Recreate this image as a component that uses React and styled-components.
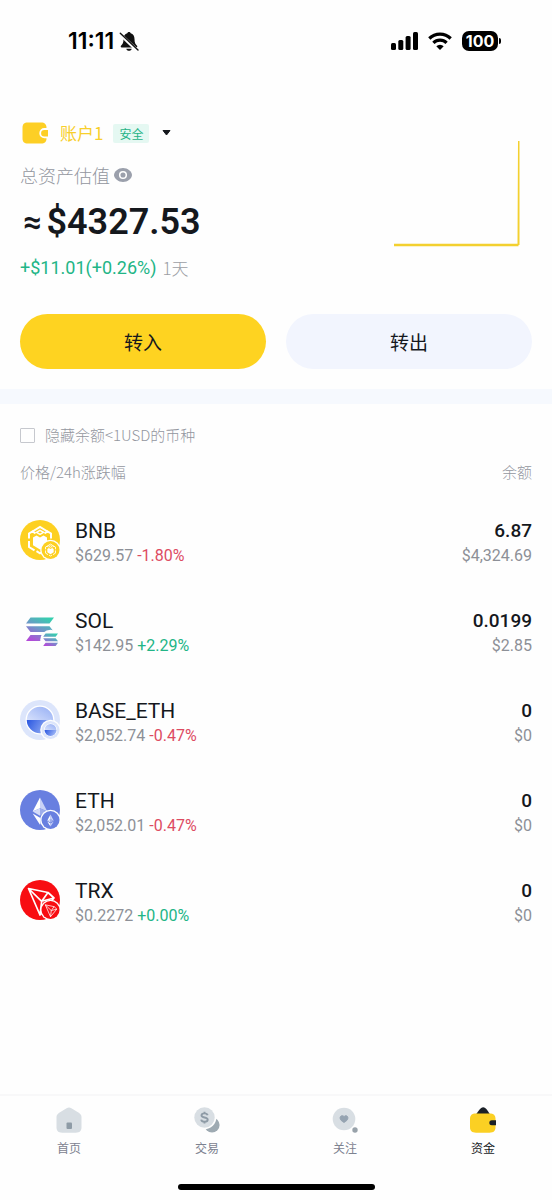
import React, { useState } from "react";
import styled, { createGlobalStyle } from "styled-components";

const GlobalStyle = createGlobalStyle`
	* {
		box-sizing: border-box;
	}

	body {
		margin: 0;
		background: #fefefe;
		color: #15181d;
		font-family: Roboto, "Noto Sans CJK SC", sans-serif;
	}

	button,
	input {
		font: inherit;
		margin: 0;
	}
`;

const Page = styled.div`
	display: flex;
	flex-direction: column;
	min-height: 100vh;
`;

const StatusBar = styled.div`
	display: flex;
	align-items: center;
	justify-content: space-between;
	height: 82px;
	padding: 0 54px 0 68px;
`;

const StatusGroup = styled.div`
	display: flex;
	align-items: center;
	gap: ${(props) => props.$gap}px;
`;

const Clock = styled.span`
	font-family: Inter, sans-serif;
	font-size: 23px;
	font-weight: 600;
	line-height: 24px;
	color: #000;
`;

const Battery = styled.span`
	position: relative;
	width: 36px;
	height: 20px;
	border-radius: 7px;
	background: #000;
	color: #fff;
	font-family: Inter, sans-serif;
	font-size: 16px;
	font-weight: 700;
	line-height: 20px;
	text-align: center;

	&::after {
		content: "";
		position: absolute;
		right: -3px;
		top: 7px;
		width: 2px;
		height: 6px;
		border-radius: 0 2px 2px 0;
		background: #000;
	}
`;

const Account = styled.section`
	padding: 41px 20px 20px;
`;

const Summary = styled.div`
	display: flex;
	justify-content: space-between;
`;

const SummaryText = styled.div`
	display: flex;
	flex-direction: column;
`;

const AccountButton = styled.button`
	display: flex;
	align-items: center;
	height: 20px;
	padding: 0 0 0 2px;
	border: 0;
	background: none;
	color: #15181d;
`;

const AccountName = styled.span`
	margin: 0 10px 0 12px;
	color: #f8cf2b;
	font-family: "Noto Sans CJK SC", sans-serif;
	font-size: 17px;
	line-height: 20px;
`;

const Tag = styled.span`
	margin-right: 13px;
	padding: 0 6px;
	border-radius: 2px;
	background: #e5f8f2;
	color: #27b386;
	font-family: "Noto Sans CJK SC", sans-serif;
	font-size: 12px;
	line-height: 19px;
`;

const TotalLabel = styled.div`
	display: flex;
	align-items: center;
	gap: 4px;
	margin-top: 20px;
	color: #93969f;
	font-family: "Noto Sans CJK SC", sans-serif;
	font-size: 18px;
	font-weight: 300;
	line-height: 24px;
`;

const IconButton = styled.button`
	display: flex;
	padding: 0;
	border: 0;
	background: none;
`;

const Balance = styled.div`
	display: flex;
	align-items: center;
	gap: 5px;
	margin-top: 15px;
	padding-left: 3px;
	font-size: 36px;
	font-weight: 600;
	line-height: 40px;
`;

const Approx = styled.span`
	font-size: 32px;
	font-weight: 700;
`;

const Change = styled.div`
	display: flex;
	align-items: center;
	gap: 6px;
	height: 24px;
	margin-top: 14px;
	font-size: 18px;
	line-height: 24px;
	color: #22b586;
`;

const Period = styled.span`
	color: #9c9ea5;
	font-family: "Noto Sans CJK SC", sans-serif;
	font-size: 17px;
	font-weight: 300;
`;

const Chart = styled.svg`
	flex: none;
	margin: 18px 12px 0 0;
`;

const Actions = styled.div`
	display: grid;
	grid-template-columns: 1fr 1fr;
	gap: 20px;
	margin-top: 34px;
`;

const ActionButton = styled.button`
	height: 55px;
	border: 0;
	border-radius: 28px;
	background: ${(props) => (props.$primary ? "#fed321" : "#f2f5fe")};
	color: #15181d;
	font-family: "Noto Sans CJK SC", sans-serif;
	font-size: 19px;
	line-height: 24px;
`;

const Divider = styled.hr`
	width: 100%;
	height: 15px;
	margin: 0;
	border: 0;
	background: #f6f9fe;
`;

const Assets = styled.section`
	padding: 21px 20px 0;
`;

const Filter = styled.label`
	display: flex;
	align-items: center;
	gap: 10px;
	color: #93969f;
	font-family: "Noto Sans CJK SC", sans-serif;
	font-size: 15px;
	font-weight: 300;
	line-height: 20px;
`;

const Checkbox = styled.input`
	appearance: none;
	width: 15px;
	height: 15px;
	border: 1px solid #c6c8ce;
	border-radius: 1px;

	&:checked {
		background: #fed321;
	}
`;

const Table = styled.table`
	width: 100%;
	margin-top: 16px;
	border-collapse: collapse;
`;

const HeadCell = styled.th`
	padding: 0 0 12px;
	color: #93969f;
	font-family: "Noto Sans CJK SC", sans-serif;
	font-size: 15px;
	font-weight: 300;
	line-height: 22px;
	text-align: ${(props) => (props.$end ? "right" : "left")};
`;

const Cell = styled.td`
	height: 90px;
	padding: 0;
	vertical-align: middle;
	text-align: ${(props) => (props.$end ? "right" : "left")};
`;

const Coin = styled.div`
	display: flex;
	align-items: center;
	gap: 14px;
`;

const CellText = styled.div`
	padding-top: 6px;
`;

const Symbol = styled.div`
	font-size: 21px;
	line-height: 26px;
`;

const Amount = styled.div`
	font-size: 19px;
	font-weight: 500;
	line-height: 26px;
`;

const Detail = styled.div`
	color: #8d9097;
	font-size: 16px;
	line-height: 24px;
`;

const Percent = styled.span`
	margin-left: 4px;
	color: ${(props) => (props.$up ? "#22b586" : "#dd4b62")};
`;

const Footer = styled.footer`
	margin-top: auto;
	border-top: 2px solid #f8f8f9;
`;

const Nav = styled.nav`
	display: grid;
	grid-template-columns: repeat(4, 1fr);
	padding-top: 11px;
`;

const NavLink = styled.a`
	display: flex;
	flex-direction: column;
	align-items: center;
	gap: 5px;
	color: ${(props) => (props.$active ? "#15181d" : "#7d8290")};
	font-family: "Noto Sans CJK SC", sans-serif;
	font-size: 12px;
	line-height: 20px;
	text-decoration: none;
`;

const HomeBar = styled.div`
	width: 197px;
	height: 6px;
	margin: 26px auto 10px;
	border-radius: 3px;
	background: #000;
`;

const BellOff = () => (
	<svg width='20' height='21' viewBox='0 0 20 21' aria-hidden='true'>
		<path
			d='M10 1c.9 0 1.600.6 1.700 1.300C14.200 3 15.500 5.200 15.500 8c0 3.800.9 5.200 2.500 6.800.6.7.3 1.700-.7 1.700H2.700c-1 0-1.300-1-.7-1.700C3.600 13.200 4.500 11.800 4.500 8c0-2.800 1.300-5 3.800-5.700C8.400 1.600 9.100 1 10 1z'
			fill='#111'
		/>
		<path d='M7.300 17.700h5.400c-.3 1.400-1.300 2.100-2.700 2.100s-2.400-.7-2.700-2.100z' fill='#111' />
		<path d='M1 3.200L18.300 19.500' stroke='#fefefe' strokeWidth='3.400' />
		<path d='M1.300 2.200L19 19' stroke='#111' strokeWidth='1.400' strokeLinecap='round' />
	</svg>
);

const Signal = () => (
	<svg width='27' height='18' viewBox='0 0 27 18' aria-hidden='true'>
		<rect x='0' y='11' width='5' height='7' rx='1.500' />
		<rect x='7.300' y='8' width='5' height='10' rx='1.500' />
		<rect x='14.600' y='4' width='5' height='14' rx='1.500' />
		<rect x='22' y='0' width='5' height='18' rx='1.500' />
	</svg>
);

const Wifi = () => (
	<svg width='24' height='18' viewBox='0 0 24 18' aria-hidden='true'>
		<g fill='none' stroke='#000' strokeWidth='3.200'>
			<path d='M1.300 6.500a15.200 15.200 0 0 1 21.400 0' />
			<path d='M5.400 10.800a9.300 9.300 0 0 1 13.200 0' />
		</g>
		<path d='M8.300 14.200a5.200 5.200 0 0 1 7.400 0L12 18z' />
	</svg>
);

const AccountIcon = () => (
	<svg width='26' height='22' viewBox='0 0 26 22' aria-hidden='true'>
		<path
			d='M6 .5h13c3.800 0 5.500 2 5.500 5.500v10c0 4-1.700 5.500-5.500 5.500H6c-4 0-5.500-1.500-5.500-5.500V6C.5 2 2 .5 6 .5z'
			fill='#fdcf25'
		/>
		<path d='M26 7h-3.600a4.200 4.200 0 0 0 0 8.400H26' fill='#fdcf25' stroke='#fff' strokeWidth='1.800' />
	</svg>
);

const Eye = () => (
	<svg width='18' height='14' viewBox='0 0 18 14' aria-hidden='true'>
		<path
			d='M9 0C13.600 0 18 3.600 18 7s-4.400 7-9 7-9-3.600-9-7 4.400-7 9-7z'
			fill='#9ba0ac'
		/>
		<circle cx='9' cy='7' r='3.300' fill='none' stroke='#fff' strokeWidth='1.500' />
	</svg>
);

const BnbMark = () => (
	<>
		<circle cx='20' cy='20' r='20' fill='#fdd021' />
		<g fill='none' stroke='#fff' strokeWidth='2'>
			<path d='M12.500 11.500L20 7l7.500 4.500' />
			<path d='M9 18.500v-5l3.500-2 3 1.800M31 18.500v-5l-3.500-2-3 1.800' />
			<path d='M9 21v6l5.500 3.300M31 21v6l-5.500 3.300M16.500 31.200L20 33.300l3.500-2.100' />
			<path d='M16.500 12.300l3.500-2 3.500 2-3.500 2z' strokeWidth='1.500' />
		</g>
		<path d='M13 17.500l3.500-2 3.500 2 3.500-2 3.500 2v7.700l-7 4.300-7-4.300z' fill='#fff' />
	</>
);

const SolMark = () => (
	<g fill='url(#solFill)'>
		<path d='M10.500 7.500H34l-4.500 6H6z' />
		<path d='M6 16.300h23.500l4.500 5.700H10.500z' />
		<path d='M10.500 25H34l-4.500 6H6z' />
	</g>
);

const BaseMark = () => (
	<>
		<circle cx='20' cy='20' r='20' fill='#dce5fb' />
		<circle cx='20' cy='20' r='14.500' fill='#fff' />
		<circle cx='20' cy='20' r='13.200' fill='url(#baseTop)' />
		<path d='M6.800 20h26.400a13.200 13.200 0 0 1-26.400 0z' fill='url(#baseBottom)' />
	</>
);

const EthMark = () => (
	<>
		<circle cx='20' cy='20' r='20' fill='#687fe0' />
		<path d='M20 7.500v10.700l-7.300 3.300z' fill='#fff' />
		<path d='M20 7.500l7.300 14-7.300-3.300z' fill='#c9d2f6' />
		<path d='M12.700 21.500l7.300-3.300v7.600z' fill='#d4dbf8' />
		<path d='M27.300 21.500L20 18.200v7.600z' fill='#9eadeb' />
		<path d='M12.700 23.500l7.300 4.200v7z' fill='#fff' />
		<path d='M27.300 23.500L20 27.700v7z' fill='#c3cdf5' />
	</>
);

const TrxMark = () => (
	<>
		<circle cx='20' cy='20' r='20' fill='#f80d12' />
		<path
			d='M8.500 8.500l19.500 4 6 5.500L20 35z M8.500 8.500l13.200 12.800L20 35M21.700 21.300L34 18M21.700 21.300L28 12.500'
			fill='none'
			stroke='#fff'
			strokeWidth='1.700'
			strokeLinejoin='round'
		/>
	</>
);

const marks = {
	BNB: BnbMark,
	SOL: SolMark,
	BASE_ETH: BaseMark,
	ETH: EthMark,
	TRX: TrxMark,
};

// token logo with its network logo in the lower right corner
const CoinIcon = ({ name }) => {
	const Mark = marks[name];

	return (
		<svg width='41' height='41' viewBox='0 0 41 41' aria-hidden='true'>
			<defs>
				<linearGradient id='solFill' gradientUnits='userSpaceOnUse' x1='26' y1='7' x2='14' y2='32'>
					<stop offset='0' stopColor='#35cfae' />
					<stop offset='0.5' stopColor='#6f95c8' />
					<stop offset='1' stopColor='#b34ad8' />
				</linearGradient>
				<linearGradient id='baseTop' x1='0' y1='1' x2='0.6' y2='0'>
					<stop offset='0' stopColor='#f4f7ff' />
					<stop offset='1' stopColor='#a3b9f6' />
				</linearGradient>
				<linearGradient id='baseBottom' x1='0' y1='0' x2='1' y2='0.3'>
					<stop offset='0' stopColor='#2956e0' />
					<stop offset='1' stopColor='#9db5f6' />
				</linearGradient>
			</defs>
			<Mark />
			<circle cx='30.500' cy='30' r='10.300' fill='#fefefe' />
			{name === "SOL" ? (
				<g transform='translate(20 19.500) scale(.53)'>
					<Mark />
				</g>
			) : (
				<g transform='translate(21.500 21) scale(.45)'>
					<Mark />
				</g>
			)}
		</svg>
	);
};

const HomeIcon = () => (
	<svg width='26' height='26' viewBox='0 0 26 26' aria-hidden='true'>
		<path
			d='M10.600 1.200c1.500-1 3.300-1 4.800 0l7.400 4.600c1.800 1.100 2.700 2.500 2.700 4.500V20c0 4-1.700 5.700-5.700 5.700H6.200C2.200 25.700.5 24 .5 20v-9.700c0-2 .9-3.400 2.700-4.500z'
			fill='#d8dee3'
		/>
		<rect x='10.500' y='15.500' width='5.500' height='6.500' rx='1' fill='#8e9ba6' />
	</svg>
);

const TradeIcon = () => (
	<svg width='26' height='26' viewBox='0 0 26 26' aria-hidden='true'>
		<circle cx='18' cy='18' r='7.600' fill='#9eaab2' />
		<circle cx='10.500' cy='10.500' r='11.800' fill='#fefefe' />
		<circle cx='10.500' cy='10.500' r='10.200' fill='#d8dee3' />
		<path
			d='M13.600 8.300c-.3-1.200-1.400-1.900-3.100-1.900-1.800 0-3 .8-3 2.100 0 2.900 6.200 1.200 6.200 4.200 0 1.300-1.300 2.100-3.200 2.100s-3.100-.8-3.300-2.100M10.500 4.800v1.800M10.500 14.600v1.800'
			fill='none'
			stroke='#8e9ba6'
			strokeWidth='1.900'
		/>
	</svg>
);

const FollowIcon = () => (
	<svg width='26' height='26' viewBox='0 0 26 26' aria-hidden='true'>
		<circle cx='12' cy='12' r='11.300' fill='#d8dee3' />
		<path
			d='M12 15.400c-2.300-1.200-3.900-2.600-3.900-4.400 0-2.600 2.700-3 3.900-1.400 1.200-1.600 3.900-1.200 3.900 1.400 0 1.800-1.600 3.200-3.900 4.400z'
			fill='#95a3b1'
			stroke='#95a3b1'
		/>
		<circle cx='23' cy='23' r='2.700' fill='#98a2aa' />
	</svg>
);

const WalletIcon = () => (
	<svg width='26' height='26' viewBox='0 0 26 26' aria-hidden='true'>
		<path d='M6 7.500c1.500-2.500 3.300-5 5.200-6.500 1.300-1 2.700-1 4 0 1.900 1.500 3.500 4 4.800 6.500z' fill='#1b2127' />
		<path
			d='M6 6.500h13.500c4.200 0 6 1.700 6 5.700V20c0 4-1.800 5.700-6 5.700H6c-4.200 0-6-1.700-6-5.700v-7.800c0-4 1.800-5.700 6-5.700z'
			fill='#fbd023'
		/>
		<path d='M26 13.300v5h-4.200a2.500 2.500 0 0 1 0-5z' fill='#1b2127' />
	</svg>
);

const coins = [
	{ name: "BNB", price: "$629.57", change: "-1.80%", amount: "6.87", value: "$4,324.69" },
	{ name: "SOL", price: "$142.95", change: "+2.29%", amount: "0.0199", value: "$2.85" },
	{ name: "BASE_ETH", price: "$2,052.74", change: "-0.47%", amount: "0", value: "$0" },
	{ name: "ETH", price: "$2,052.01", change: "-0.47%", amount: "0", value: "$0" },
	{ name: "TRX", price: "$0.2272", change: "+0.00%", amount: "0", value: "$0" },
];

const tabs = [
	{ label: "首页", Icon: HomeIcon },
	{ label: "交易", Icon: TradeIcon },
	{ label: "关注", Icon: FollowIcon },
	{ label: "资金", Icon: WalletIcon, active: true },
];

const App = () => {
	const [hideSmall, setHideSmall] = useState(false);
	const shown = hideSmall ? coins.filter((coin) => coin.value !== "$0") : coins;

	return (
		<Page>
			<GlobalStyle />
			<StatusBar>
				<StatusGroup $gap={5}>
					<Clock>11:11</Clock>
					<BellOff />
				</StatusGroup>
				<StatusGroup $gap={10}>
					<Signal />
					<Wifi />
					<Battery>100</Battery>
				</StatusGroup>
			</StatusBar>

			<Account>
				<Summary>
					<SummaryText>
						<AccountButton>
							<AccountIcon />
							<AccountName>账户1</AccountName>
							<Tag>安全</Tag>
							<svg width='9' height='6' viewBox='0 0 9 6' aria-hidden='true'>
								<path d='M1 .5h7l-3.500 4.500z' fill='#15181d' stroke='#15181d' strokeLinejoin='round' />
							</svg>
						</AccountButton>
						<TotalLabel>
							总资产估值
							<IconButton aria-label='显示余额'>
								<Eye />
							</IconButton>
						</TotalLabel>
						<Balance>
							<Approx>≈</Approx>
							<span>$4327.53</span>
						</Balance>
						<Change>
							<span>+$11.01(+0.26%)</span>
							<Period>1天</Period>
						</Change>
					</SummaryText>
					<Chart width='127' height='106' viewBox='0 0 127 106' aria-hidden='true'>
						<path d='M1 104h125.500V0h-1.500l-.5 103H1z' fill='#f3d02f' />
						<path d='M1 104h124.500' stroke='#f3d02f' strokeWidth='2.500' />
					</Chart>
				</Summary>
				<Actions>
					<ActionButton $primary>转入</ActionButton>
					<ActionButton>转出</ActionButton>
				</Actions>
			</Account>

			<Divider />

			<Assets>
				<Filter>
					<Checkbox
						type='checkbox'
						checked={hideSmall}
						onChange={(e) => setHideSmall(e.target.checked)}
					/>
					隐藏余额&lt;1USD的币种
				</Filter>
				<Table>
					<thead>
						<tr>
							<HeadCell>价格/24h涨跌幅</HeadCell>
							<HeadCell $end>余额</HeadCell>
						</tr>
					</thead>
					<tbody>
						{shown.map((coin) => (
							<tr key={coin.name}>
								<Cell>
									<Coin>
										<CoinIcon name={coin.name} />
										<CellText>
											<Symbol>{coin.name}</Symbol>
											<Detail>
												{coin.price}
												<Percent $up={coin.change.startsWith("+")}>{coin.change}</Percent>
											</Detail>
										</CellText>
									</Coin>
								</Cell>
								<Cell $end>
									<CellText>
										<Amount>{coin.amount}</Amount>
										<Detail>{coin.value}</Detail>
									</CellText>
								</Cell>
							</tr>
						))}
					</tbody>
				</Table>
			</Assets>

			<Footer>
				<Nav>
					{tabs.map(({ label, Icon, active }) => (
						<NavLink key={label} href='#' $active={active}>
							<Icon />
							{label}
						</NavLink>
					))}
				</Nav>
				<HomeBar />
			</Footer>
		</Page>
	);
};

export default App;
